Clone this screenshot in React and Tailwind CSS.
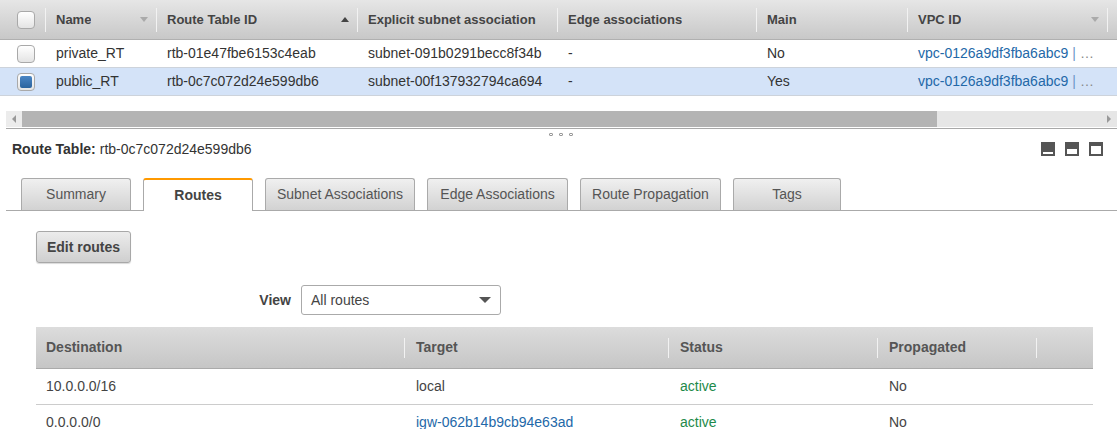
import React from 'react';

const topCols = [
    { key: 'name', label: 'Name', w: 'w-[111px]', arrow: 'down' },
    { key: 'id', label: 'Route Table ID', w: 'w-[201px]', arrow: 'up' },
    { key: 'subnet', label: 'Explicit subnet association', w: 'w-[200px]' },
    { key: 'edge', label: 'Edge associations', w: 'w-[199px]' },
    { key: 'main', label: 'Main', w: 'w-[151px]' },
    { key: 'vpc', label: 'VPC ID', w: 'w-[200px]', arrow: 'down' },
];

const topRows = [
    { name: 'private_RT', id: 'rtb-01e47fbe6153c4eab', subnet: 'subnet-091b0291becc8f34b', edge: '-', main: 'No', vpc: 'vpc-0126a9df3fba6abc9', selected: false },
    { name: 'public_RT', id: 'rtb-0c7c072d24e599db6', subnet: 'subnet-00f137932794ca694', edge: '-', main: 'Yes', vpc: 'vpc-0126a9df3fba6abc9', selected: true },
];

const tabs = [
    { label: 'Summary', w: 'w-[110px]' },
    { label: 'Routes', w: 'w-[110px]', active: true },
    { label: 'Subnet Associations', w: 'w-[150px]' },
    { label: 'Edge Associations', w: 'w-[141px]' },
    { label: 'Route Propagation', w: 'w-[141px]' },
    { label: 'Tags', w: 'w-[108px]' },
];

const routeCols = [
    { label: 'Destination', w: 'w-[368px]', first: true },
    { label: 'Target', w: 'w-[264px]' },
    { label: 'Status', w: 'w-[209px]' },
    { label: 'Propagated', w: 'w-[159px]' },
];

const routes = [
    { dest: '10.0.0.0/16', target: 'local', link: false, status: 'active', prop: 'No' },
    { dest: '0.0.0.0/0', target: 'igw-062b14b9cb94e63ad', link: true, status: 'active', prop: 'No' },
];

function Checkbox({ checked }) {
    return (
        <div className="w-[18px] h-[18px] rounded-[4px] border border-[#a9a9a9] bg-gradient-to-b from-[#ffffff] to-[#e4e4e4] p-[2px]">
            {checked && <div className="w-full h-full rounded-[2px] bg-gradient-to-b from-[#4a86c5] to-[#2b649e]" />}
        </div>
    );
}

function SortArrow({ dir }) {
    if (dir === 'up') {
        return <span className="w-0 h-0 border-x-[4px] border-x-transparent border-b-[5px] border-b-[#444]" />;
    }
    return <span className="w-0 h-0 border-x-[4px] border-x-transparent border-t-[5px] border-t-[#aaa]" />;
}

function PanelIcon({ fill }) {
    return (
        <div className="w-[14px] h-[14px] bg-[#555] flex flex-col justify-end p-[2px]">
            <div className={`bg-white w-full ${fill}`} />
        </div>
    );
}

export default function App() {
    return (
        <div className="w-[1117px] h-[429px] overflow-hidden bg-white text-[#333] font-['Liberation_Sans',Arial,sans-serif]">
            {/* top table */}
            <div className="flex h-[40px] bg-gradient-to-b from-[#e6e6e6] to-[#c8c8c8] border-b border-[#b0b0b0] text-[13px] font-bold text-[#444]">
                <div className="w-[45px] flex items-center pl-[17px]">
                    <Checkbox />
                </div>
                {topCols.map((c) => (
                    <div key={c.key} className={`${c.w} flex items-center overflow-hidden whitespace-nowrap`}>
                        <span className="w-px h-[24px] bg-[#f2f2f2] shrink-0" />
                        <span className="pl-[10px] overflow-hidden">{c.label}</span>
                        {c.arrow && (
                            <span className="ml-auto pr-[8px] flex items-center shrink-0">
                                <SortArrow dir={c.arrow} />
                            </span>
                        )}
                    </div>
                ))}
                <div className="flex-1 flex items-center">
                    <span className="w-px h-[24px] bg-[#f2f2f2]" />
                </div>
            </div>
            {topRows.map((r) => (
                <div key={r.id} className={`flex h-[28px] border-b border-[#cdd3db] text-[14px] ${r.selected ? 'bg-[#d4e3f8]' : 'bg-white'}`}>
                    <div className="w-[45px] flex items-center pl-[17px]">
                        <Checkbox checked={r.selected} />
                    </div>
                    <div className="w-[111px] flex items-center pl-[11px]">{r.name}</div>
                    <div className="w-[201px] flex items-center pl-[11px]">{r.id}</div>
                    <div className="w-[200px] flex items-center pl-[11px]">{r.subnet}</div>
                    <div className="w-[199px] flex items-center pl-[11px]">{r.edge}</div>
                    <div className="w-[151px] flex items-center pl-[11px]">{r.main}</div>
                    <div className="w-[200px] flex items-center pl-[11px] whitespace-nowrap overflow-hidden">
                        <span className="text-[#2368a8]">{r.vpc}</span>
                        <span className="text-[#6b95c8] ml-[4px]">|</span>
                        <span className="text-[#888] ml-[4px]">…</span>
                    </div>
                </div>
            ))}

            {/* horizontal scrollbar */}
            <div className="mt-[15px] ml-[6px] border-b border-[#a8a8a8] pb-px">
                <div className="flex h-[16px] bg-[#e6e6e6]">
                    <div className="w-[16px] bg-[#ececec] flex items-center justify-center">
                        <span className="w-0 h-0 border-y-[4px] border-y-transparent border-r-[4px] border-r-[#999]" />
                    </div>
                    <div className="w-[915px] bg-[#b4b4b4]" />
                    <div className="flex-1" />
                    <div className="w-[16px] flex items-center justify-center">
                        <span className="w-0 h-0 border-y-[4px] border-y-transparent border-l-[4px] border-l-[#999]" />
                    </div>
                </div>
            </div>
            <div className="flex justify-center gap-[6px] pl-[4px] mt-[4px] h-[3px]">
                <span className="w-[4px] h-[3px] border border-[#999] rounded-[1px]" />
                <span className="w-[4px] h-[3px] border border-[#999] rounded-[1px]" />
                <span className="w-[4px] h-[3px] border border-[#999] rounded-[1px]" />
            </div>

            {/* details header */}
            <div className="flex items-center mt-[6px] h-[14px] pl-[12px] pr-[14px] text-[14px]">
                <span className="font-bold text-[#333]">Route Table:</span>
                <span className="ml-[4px] text-[#333]">rtb-0c7c072d24e599db6</span>
                <div className="ml-auto flex gap-[10px]">
                    <PanelIcon fill="h-[2px]" />
                    <PanelIcon fill="h-[5px]" />
                    <PanelIcon fill="h-[8px]" />
                </div>
            </div>

            {/* tabs */}
            <div className="mt-[22px] ml-[6px] pl-[15px] flex items-end gap-[12px] border-b border-[#aaa] h-[33px]">
                {tabs.map((t) =>
                    t.active ? (
                        <div key={t.label} className={`${t.w} h-[33px] -mb-px bg-white border-x border-[#aaa] border-t-2 border-t-[#f90] rounded-t-[3px] flex items-center justify-center text-[14px] font-bold text-[#444]`}>
                            {t.label}
                        </div>
                    ) : (
                        <div key={t.label} className={`${t.w} h-[32px] bg-gradient-to-b from-[#f0f0f0] to-[#d2d2d2] border border-b-0 border-[#aaa] rounded-t-[3px] flex items-center justify-center text-[14px] text-[#555]`}>
                            {t.label}
                        </div>
                    )
                )}
            </div>

            {/* routes panel */}
            <div className="pl-[36px] pr-[24px]">
                <button className="mt-[20px] h-[32px] w-[95px] rounded-[3px] border border-[#a8a8a8] bg-gradient-to-b from-[#ececec] to-[#cfcfcf] text-[14px] font-bold text-[#444] shadow-[0_1px_1px_rgba(0,0,0,0.15)]">
                    Edit routes
                </button>

                <div className="mt-[22px] flex items-center">
                    <span className="w-[255px] text-right text-[14px] font-bold text-[#444]">View</span>
                    <div className="ml-[10px] w-[200px] h-[30px] border border-[#aaa] rounded-[3px] flex items-center pl-[9px] pr-[9px] text-[14px] text-[#444]">
                        All routes
                        <span className="ml-auto w-0 h-0 border-x-[6px] border-x-transparent border-t-[6px] border-t-[#555]" />
                    </div>
                </div>

                <div className="mt-[12px] w-[1057px]">
                    <div className="flex h-[42px] bg-gradient-to-b from-[#dcdcdc] to-[#c6c6c6] border-b border-[#aaa] text-[14px] font-bold text-[#555]">
                        {routeCols.map((c) => (
                            <div key={c.label} className={`${c.w} flex items-center`}>
                                {!c.first && <span className="w-px h-[20px] bg-[#f2f2f2] shrink-0" />}
                                <span className={c.first ? 'pl-[10px]' : 'pl-[11px]'}>{c.label}</span>
                            </div>
                        ))}
                        <div className="flex-1 flex items-center">
                            <span className="w-px h-[20px] bg-[#f2f2f2]" />
                        </div>
                    </div>
                    {routes.map((r) => (
                        <div key={r.dest} className="flex h-[36px] border-b border-[#ccc] text-[14px] text-[#444]">
                            <div className="w-[368px] flex items-center pl-[10px]">{r.dest}</div>
                            <div className="w-[264px] flex items-center pl-[12px]">
                                <span className={r.link ? 'text-[#2368a8]' : ''}>{r.target}</span>
                            </div>
                            <div className="w-[209px] flex items-center pl-[12px] text-[#1d8a4a]">{r.status}</div>
                            <div className="w-[159px] flex items-center pl-[12px]">{r.prop}</div>
                        </div>
                    ))}
                </div>
            </div>
        </div>
    );
}
